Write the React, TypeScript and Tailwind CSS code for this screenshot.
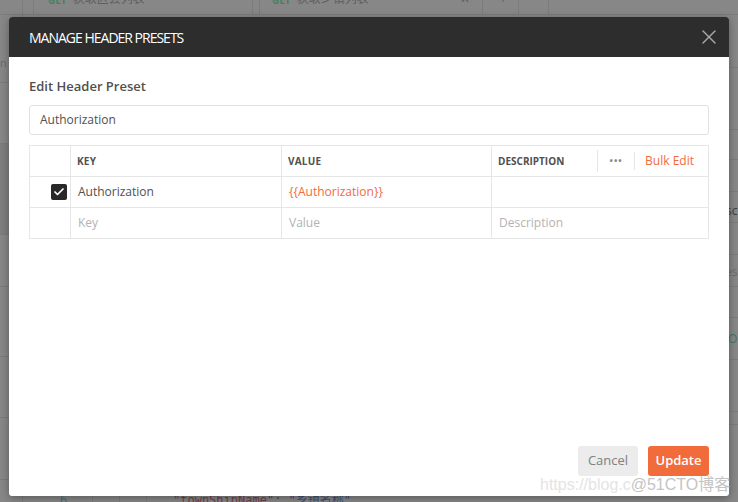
import { Check, X } from "lucide-react";

const font = "font-['Open_Sans','Noto_Sans_CJK_SC',sans-serif]";

const columns = ["KEY", "VALUE"];

function BackgroundApp() {
  return (
    <div className="flex h-full w-full flex-col">
      {/* tab strip, mostly hidden behind the modal */}
      <div className="flex h-[15px] border-b border-[#7c7c7c]">
        <div className="w-[23px] border-r border-[#7c7c7c]" />
        <div className="ml-[10px] flex w-[220px] items-end overflow-hidden border-l border-r border-[#7c7c7c] pb-[9px] pl-[14px]">
          <span className="text-[10px] font-bold leading-[10px] text-[#4d7f63]">GET</span>
          <span className="ml-[6px] text-[12px] leading-[12px] text-[#5f5f5f]">获取区县列表</span>
        </div>
        <div className="ml-[6px] flex w-[224px] items-end overflow-hidden border-l border-r border-[#7c7c7c] pb-[9px] pl-[12px]">
          <span className="text-[10px] font-bold leading-[10px] text-[#4d7f63]">GET</span>
          <span className="ml-[6px] text-[12px] leading-[12px] text-[#5f5f5f]">获取乡镇列表</span>
          <span className="ml-auto mr-[12px] text-[12px] leading-[12px] text-[#5f5f5f]">✕</span>
        </div>
        <div className="ml-[5px] flex w-[31px] items-end justify-center border-r border-[#7c7c7c] pb-[8px] text-[14px] leading-[14px] text-[#5f5f5f]">
          +
        </div>
        <div className="flex w-[30px] items-end justify-center border-r border-[#7c7c7c] pb-[10px] text-[10px] leading-[10px] tracking-[1px] text-[#5f5f5f]">
          •••
        </div>
      </div>

      <div className="flex flex-1">
        {/* left strip */}
        <div className="flex w-[23px] flex-col border-r border-[#7c7c7c]">
          <div className="h-[68px] border-b border-[#7c7c7c] pt-[42px] text-[11px] leading-[12px] text-[#6a6a6a]">n</div>
          <div className="h-[61px] border-b border-[#7c7c7c]" />
          <div className="h-[91px] border-b border-[#7c7c7c] bg-[#7f7f7f]" />
          <div className="h-[52px] border-b border-[#7c7c7c]" />
          <div className="h-[70px] border-b border-[#7c7c7c]" />
          <div className="h-[61px] border-b border-[#7c7c7c]" />
          <div className="h-[62px] border-b border-[#7c7c7c]" />
        </div>

        <div className="flex flex-1 flex-col">
          <div className="flex-1" />
          {/* code editor peeking out under the modal */}
          <div className="flex h-[9px] overflow-hidden">
            <div className="w-[70px] border-r border-[#7c7c7c] pl-[37px] font-['DejaVu_Sans_Mono',monospace] text-[12px] leading-[14px] text-[#4f6a80]">
              6
            </div>
            <div className="w-[27px] border-r border-[#7c7c7c]" />
            <div className="w-[27px] border-r border-[#7c7c7c]" />
            <div className="flex-1 pl-[26px] font-['DejaVu_Sans_Mono','Noto_Sans_CJK_SC',monospace] text-[12px] leading-[14px]">
              <span className="text-[#7a3b4a]">"townShipName"</span>
              <span className="text-[#4a4a4a]">: </span>
              <span className="text-[#3f4f7a]">"乡镇名称"</span>
              <span className="text-[#4a4a4a]">,</span>
            </div>
          </div>
        </div>

        {/* right strip */}
        <div className="flex w-[10px] flex-col overflow-hidden text-[12px] leading-[14px]">
          <div className="h-[53px] border-b border-[#7c7c7c]" />
          <div className="h-[62px] border-b border-[#7c7c7c]" />
          <div className="h-[30px] border-b border-[#7c7c7c]" />
          <div className="h-[32px] border-b border-[#7c7c7c]" />
          <div className="h-[31px] border-b border-[#7c7c7c] pt-[12px] text-[#3f3f3f]">
            <span className="-ml-[2px]">sc</span>
          </div>
          <div className="h-[32px] border-b border-[#7c7c7c]" />
          <div className="h-[32px] border-b border-[#7c7c7c] pt-[10px] text-[#6e6e6e]">
            <span className="-ml-[3px]">es</span>
          </div>
          <div className="h-[31px] border-b border-[#7c7c7c]" />
          <div className="h-[42px] border-b border-[#7c7c7c] pt-[14px] text-[#3f7a5a]">O</div>
          <div className="h-[52px] border-b border-[#7c7c7c]" />
          <div className="h-[13px] border-b border-[#7c7c7c]" />
        </div>
      </div>
    </div>
  );
}

function PresetTable() {
  return (
    <div className="mt-[10px] grid grid-cols-[41px_211px_210px_1fr] border-l border-t border-[#e6e6e6]">
      {/* header */}
      <div className="h-[31px] border-b border-r border-[#e6e6e6]" />
      {columns.map((c) => (
        <div
          key={c}
          className="flex h-[31px] items-center border-b border-r border-[#e6e6e6] pl-[6px] text-[10px] font-bold tracking-[0.2px] text-[#505050]"
        >
          {c}
        </div>
      ))}
      <div className="flex h-[31px] items-center border-b border-r border-[#e6e6e6] pl-[6px] text-[10px] font-bold text-[#505050]">
        <span>DESCRIPTION</span>
        <div className="ml-auto flex items-center">
          <div className="flex h-[22px] w-[37px] items-center justify-center border-l border-[#e6e6e6] text-[9px] tracking-[1px] text-[#888]">
            •••
          </div>
          <div className="h-[18px] border-l border-[#e6e6e6]" />
          <span className="pl-[10px] pr-[14px] text-[12px] font-normal text-[#f26b3a]">
            Bulk Edit
          </span>
        </div>
      </div>

      {/* filled row */}
      <div className="flex h-[31px] items-center justify-end border-b border-r border-[#e6e6e6] pr-[3px]">
        <div className="flex h-[16px] w-[16px] items-center justify-center rounded-[2px] bg-[#282828]">
          <Check size={12} strokeWidth={3.5} className="text-white" />
        </div>
      </div>
      <div className="flex h-[31px] items-center border-b border-r border-[#e6e6e6] pl-[7px] text-[12px] text-[#505050]">
        Authorization
      </div>
      <div className="flex h-[31px] items-center border-b border-r border-[#e6e6e6] pl-[7px] text-[12px] text-[#f26b3a]">
        {"{{Authorization}}"}
      </div>
      <div className="h-[31px] border-b border-r border-[#e6e6e6]" />

      {/* empty row */}
      <div className="h-[31px] border-b border-r border-[#e6e6e6]" />
      <div className="flex h-[31px] items-center border-b border-r border-[#e6e6e6] pl-[7px] text-[12px] text-[#b3b3b3]">
        Key
      </div>
      <div className="flex h-[31px] items-center border-b border-r border-[#e6e6e6] pl-[7px] text-[12px] text-[#b3b3b3]">
        Value
      </div>
      <div className="flex h-[31px] items-center border-b border-r border-[#e6e6e6] pl-[7px] text-[12px] text-[#b3b3b3]">
        Description
      </div>
    </div>
  );
}

export default function App() {
  return (
    <div className={`relative h-[502px] w-[738px] overflow-hidden bg-[#878787] ${font}`}>
      <BackgroundApp />

      <div className="absolute left-[9px] top-[17px] flex h-[479px] w-[720px] flex-col overflow-hidden rounded-[3px] bg-white shadow-[0_2px_8px_rgba(0,0,0,0.35)]">
        <div className="flex h-[40px] items-center justify-between bg-[#2d2d2d] pl-[20px] pr-[8px]">
          <span className="text-[14px] tracking-[-1px] text-white">MANAGE HEADER PRESETS</span>
          <X size={24} strokeWidth={1.4} className="text-[#a8a8a8]" />
        </div>

        <div className="flex flex-1 flex-col px-[20px] pt-[20px] pb-[20px]">
          <div className="text-[13px] font-semibold leading-[18px] text-[#505050]">
            Edit Header Preset
          </div>
          <div className="mt-[10px] flex h-[30px] items-center rounded-[3px] border border-[#e0e0e0] px-[10px] text-[12px] text-[#505050]">
            Authorization
          </div>

          <PresetTable />

          <div className="mt-auto flex justify-end gap-[10px]">
            <button className="h-[30px] w-[60px] rounded-[3px] bg-[#ececec] text-[13px] text-[#808080]">
              Cancel
            </button>
            <button className="h-[30px] w-[61px] rounded-[3px] bg-[#f26b3a] text-[13px] font-semibold text-white">
              Update
            </button>
          </div>
        </div>
      </div>

      {/* watermark */}
      <div className="pointer-events-none absolute left-[540px] top-[475px] flex items-baseline whitespace-nowrap font-['Liberation_Sans','Noto_Sans_CJK_SC',sans-serif] text-[16px] leading-[19px]">
        <span className="text-[#e4e4e4]">https://blog.c</span>
        <span className="text-[#c4c4c4]">@51CTO博客</span>
      </div>
    </div>
  );
}
